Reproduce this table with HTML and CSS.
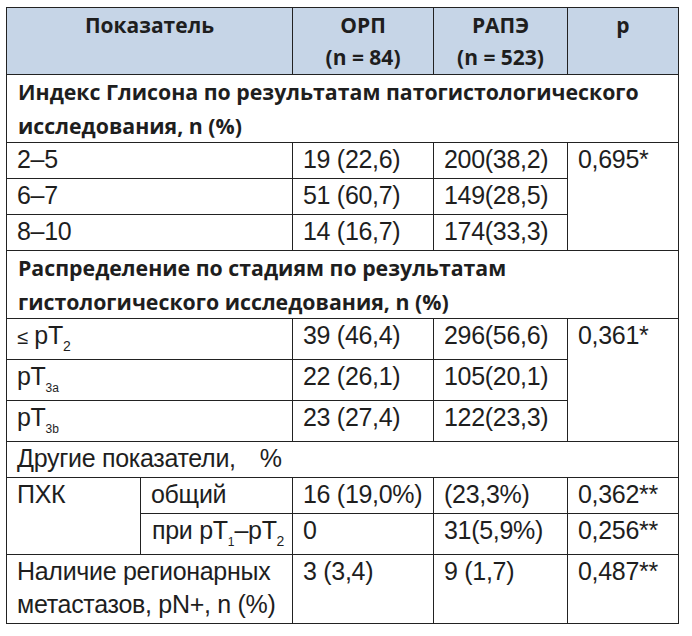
FILE: index.html
```html
<!DOCTYPE html>
<html lang="ru">
<head>
<meta charset="utf-8">
<link rel="stylesheet" href="styles.css">
</head>
<body>
<table class="data">
  <colgroup>
    <col class="c-a"><col class="c-b"><col class="c-c"><col class="c-d"><col class="c-e">
  </colgroup>
  <thead>
    <tr class="head">
      <th colspan="2">Показатель</th>
      <th>ОРП<br>(n = 84)</th>
      <th>РАПЭ<br>(n = 523)</th>
      <th>p</th>
    </tr>
  </thead>
  <tbody>
    <tr class="section"><td colspan="5">Индекс Глисона по результатам патогистологического исследования, n (%)</td></tr>
    <tr class="row"><td colspan="2">2–5</td><td>19 (22,6)</td><td>200(38,2)</td><td rowspan="3">0,695*</td></tr>
    <tr class="row"><td colspan="2">6–7</td><td>51 (60,7)</td><td>149(28,5)</td></tr>
    <tr class="row"><td colspan="2">8–10</td><td>14 (16,7)</td><td>174(33,3)</td></tr>
    <tr class="section"><td colspan="5">Распределение по стадиям по результатам гистологического исследования, n (%)</td></tr>
    <tr class="row tall"><td colspan="2"><span class="le">≤</span> pT<sub>2</sub></td><td>39 (46,4)</td><td>296(56,6)</td><td rowspan="3">0,361*</td></tr>
    <tr class="row tall"><td colspan="2">pT<sub class="small">3a</sub></td><td>22 (26,1)</td><td>105(20,1)</td></tr>
    <tr class="row tall"><td colspan="2">pT<sub class="small">3b</sub></td><td>23 (27,4)</td><td>122(23,3)</td></tr>
    <tr class="row"><td colspan="5">Другие показатели,<span class="gap">%</span></td></tr>
    <tr class="row"><td rowspan="2">ПХК</td><td>общий</td><td>16 (19,0%)</td><td>(23,3%)</td><td>0,362**</td></tr>
    <tr class="row tall"><td class="tight">при pT<sub class="small">1</sub>–pT<sub>2</sub></td><td>0</td><td>31(5,9%)</td><td>0,256**</td></tr>
    <tr class="row"><td colspan="2">Наличие регионарных метастазов, pN+, n (%)</td><td>3 (3,4)</td><td>9 (1,7)</td><td>0,487**</td></tr>
  </tbody>
</table>
</body>
</html>
```
FILE: styles.css
```css
html, body {
  margin: 0;
  padding: 0;
  background: #ffffff;
}
body {
  padding: 7px 0 0 6px;
  color: #1e1e1e;
}
.data {
  border-collapse: collapse;
  table-layout: fixed;
  width: 672px;
  font-family: "Liberation Sans", Arial, sans-serif;
  font-size: 25px;
}
.c-a { width: 134px; }
.c-b { width: 152px; }
.c-c { width: 141px; }
.c-d { width: 134px; }
.c-e { width: 111px; }
.data th, .data td {
  border: 1.5px solid #222222;
  vertical-align: top;
  text-align: left;
}
.head th {
  background: #c6d5e7;
  font-family: "Open Sans", sans-serif;
  font-weight: 700;
  font-size: 21px;
  line-height: 32px;
  padding: 1px 6px 1px;
  text-align: center;
  height: 64px;
}
.section td {
  font-family: "Open Sans", sans-serif;
  font-weight: 700;
  font-size: 21.3px;
  line-height: 33.5px;
  padding: 0 8px 0 11px;
}
.row td {
  line-height: 33px;
  padding: 0 4px 2px 10px;
  letter-spacing: -0.3px;
}
.row.tall td {
  height: 38px;
}
.row td.tight {
  padding-left: 11px;
  padding-right: 0;
  white-space: nowrap;
}
.gap {
  margin-left: 24px;
}
sub {
  font-size: 14px;
  vertical-align: -7px;
  line-height: 0;
  letter-spacing: 0;
}
sub.small {
  font-size: 12px;
}
.le {
  font-size: 20px;
}
```
